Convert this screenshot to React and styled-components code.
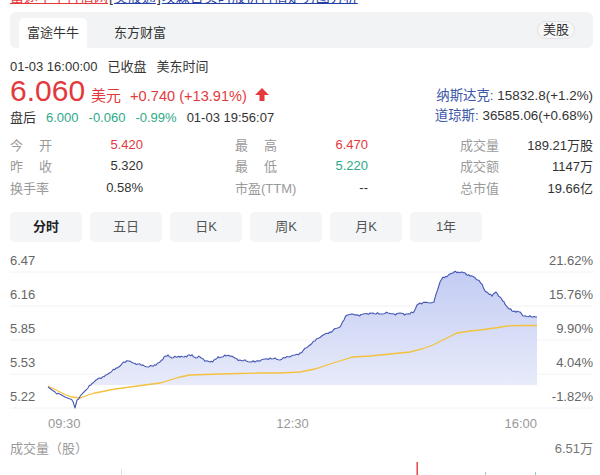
import React from 'react';
import styled, { createGlobalStyle } from 'styled-components';

const FONT = `"Liberation Sans", "Noto Sans CJK SC", sans-serif`;
const RED = '#e4393c';
const GREEN = '#2daa87';

const GlobalStyle = createGlobalStyle`
  html, body {
    margin: 0;
    padding: 0;
    background: #fff;
  }
  body {
    font-family: ${FONT};
    color: #333;
  }
`;

const Page = styled.div`
  width: 583px;
  padding-left: 10px;
  font-size: 13px;
`;

const TopLinks = styled.div`
  height: 6px;
  overflow: hidden;
  white-space: nowrap;
`;

const TopLinksInner = styled.div`
  margin-top: -10px;
  font-size: 14px;
  line-height: 14px;
  display: flex;
  gap: 1px;
`;

const TopLink = styled.span`
  color: ${p => (p.$red ? RED : '#2440a8')};
  text-decoration: underline;
`;

const SourceBar = styled.div`
  margin-top: 6px;
  height: 36px;
  box-sizing: border-box;
  padding: 6px 18px 0 9px;
  background: #f2f3f5;
  border-radius: 6px;
  display: flex;
  align-items: flex-end;
  gap: 19px;
`;

const SourceTab = styled.div`
  height: 30px;
  line-height: 30px;
  padding: 0 8px;
  font-size: 13px;
  color: #333;
  background: ${p => (p.$active ? '#fff' : 'transparent')};
  border-radius: 5px 5px 0 0;
`;

const MarketPill = styled.div`
  margin-left: auto;
  align-self: center;
  margin-top: -6px;
  padding: 0 5px;
  height: 16px;
  line-height: 16px;
  font-size: 13px;
  color: #333;
  background: #f7f7f7;
  border: 1px solid #e2e2e2;
  border-radius: 9px;
`;

const Quote = styled.div`
  margin-top: 10px;
  display: flex;
  justify-content: space-between;
  align-items: flex-end;
`;

const QuoteMain = styled.div`
  display: flex;
  flex-direction: column;
`;

const Line = styled.div`
  line-height: 18px;
  display: flex;
  gap: ${p => p.$gap || 10}px;
  white-space: nowrap;
`;

const PriceRow = styled.div`
  display: flex;
  align-items: baseline;
  height: 30px;
  margin-bottom: 3px;
  white-space: nowrap;
`;

const Price = styled.span`
  font-size: 30px;
  line-height: 30px;
  color: ${RED};
`;

const Currency = styled.span`
  font-size: 15px;
  color: ${RED};
  margin-left: 6px;
`;

const Change = styled.span`
  font-size: 14.6px;
  color: ${RED};
  margin-left: 9px;
`;

const UpArrow = styled.svg`
  width: 14px;
  height: 13px;
  margin-left: 8px;
  align-self: center;
  margin-top: 6px;
`;

const Green = styled.span`
  color: ${GREEN};
`;

const Indexes = styled.div`
  display: flex;
  flex-direction: column;
  align-items: flex-end;
  margin-bottom: 1px;
`;

const IndexLine = styled.div`
  line-height: 20px;
  font-size: 13.4px;
  white-space: nowrap;
`;

const IndexName = styled.span`
  color: #3d57a8;
`;

const Stats = styled.div`
  margin-top: 7px;
  display: grid;
  grid-template-columns: 133px 133px 133px;
  column-gap: 92px;
`;

const StatCell = styled.div`
  height: 21.3px;
  display: flex;
  align-items: center;
  justify-content: space-between;
  white-space: nowrap;
`;

const StatLabel = styled.span`
  color: #9a9a9a;
  width: ${p => (p.$spread ? '42px' : 'auto')};
  text-align: justify;
  text-align-last: ${p => (p.$spread ? 'justify' : 'auto')};
`;

const StatValue = styled.span`
  color: ${p => p.$color || '#333'};
`;

const Periods = styled.div`
  margin-top: 14px;
  display: flex;
  gap: 8px;
`;

const PeriodTab = styled.div`
  width: 72px;
  height: 30px;
  line-height: 30px;
  text-align: center;
  background: #f4f5f7;
  border-radius: 5px;
  font-size: 13px;
  color: ${p => (p.$active ? '#222' : '#555')};
  font-weight: ${p => (p.$active ? 700 : 400)};
`;

const ChartSvg = styled.svg`
  display: block;
  margin-top: 8px;
  width: 583px;
  height: 182px;
  font-family: ${FONT};
`;

const VolumeHead = styled.div`
  margin-top: 8px;
  height: 18px;
  line-height: 18px;
  display: flex;
  justify-content: space-between;
  color: #9a9a9a;
`;

const VolumeMax = styled.span`
  color: #777;
`;

const VolumeSvg = styled.svg`
  display: block;
  width: 583px;
  height: 20px;
`;

// page coordinates traced from the trading session
const pricePts = [
  [48, 387], [52, 390], [55, 392], [60, 394], [65, 397], [70, 399], [73, 402], [75, 408],
  [77, 400], [80, 396], [84, 392], [88, 388], [92, 384], [96, 380], [100, 378], [104, 376],
  [108, 374], [112, 371], [116, 369], [120, 366], [124, 362], [128, 360], [133, 363],
  [138, 364], [143, 366], [148, 367], [152, 366], [156, 364], [160, 362], [164, 357],
  [168, 356], [172, 358], [176, 357], [180, 356], [184, 357], [188, 355], [192, 356],
  [196, 358], [200, 357], [205, 360], [210, 362], [214, 360], [218, 358], [222, 357],
  [226, 356], [230, 355], [235, 358], [240, 360], [245, 361], [250, 362], [255, 362],
  [260, 360], [265, 359], [270, 358], [275, 359], [280, 360], [285, 358], [290, 356],
  [295, 355], [300, 353], [305, 349], [310, 345], [315, 341], [320, 337], [325, 334],
  [330, 332], [335, 329], [340, 327], [344, 320], [347, 315], [352, 314], [358, 315],
  [364, 314], [370, 313], [376, 314], [382, 314], [388, 313], [394, 314], [400, 313],
  [406, 314], [410, 314], [414, 312], [417, 305], [420, 303], [425, 302], [430, 303],
  [434, 302], [437, 292], [440, 282], [443, 277], [447, 276], [450, 274], [454, 272],
  [458, 273], [462, 272], [466, 274], [470, 275], [474, 277], [478, 280], [482, 285],
  [485, 291], [488, 293], [492, 295], [496, 292], [500, 297], [504, 303], [508, 308],
  [512, 311], [516, 311], [520, 312], [524, 316], [530, 317], [537, 317],
];

const avgPts = [
  [48, 386], [54, 389], [60, 392], [66, 395], [72, 397], [80, 398], [88, 395], [95, 393],
  [105, 391], [115, 389], [130, 387], [145, 385], [160, 383], [170, 380], [180, 377],
  [190, 375], [205, 374.5], [220, 374], [240, 373.5], [260, 373], [280, 373], [300, 372],
  [315, 369], [330, 364], [343, 360], [353, 357], [370, 356], [390, 354], [410, 352],
  [422, 349], [433, 345], [445, 339], [457, 333], [470, 331], [480, 330], [495, 328],
  [507, 326], [520, 325.5], [537, 325.5],
];

const OX = 10;
const OY = 250;

// densify with a little deterministic noise so the line looks tick-by-tick
const jagged = pts => {
  const out = [];
  for (let i = 0; i < pts.length - 1; i++) {
    const [x1, y1] = pts[i];
    const [x2, y2] = pts[i + 1];
    const steps = Math.max(1, Math.round((x2 - x1) / 1.5));
    for (let s = 0; s < steps; s++) {
      const t = s / steps;
      const n = (i * 7 + s) % 3 === 0 ? Math.sin(i * 3.1 + s * 1.7) * 1.3 : 0;
      out.push([x1 + (x2 - x1) * t, y1 + (y2 - y1) * t + n]);
    }
  }
  out.push(pts[pts.length - 1]);
  return out;
};

const toPath = pts =>
  pts.map(([x, y], i) => `${i ? 'L' : 'M'}${(x - OX).toFixed(1)} ${(y - OY).toFixed(1)}`).join(' ');

const priceLine = jagged(pricePts);
const pricePath = toPath(priceLine);
const areaPath = `${pricePath} L${537 - OX} ${385 - OY} L${48 - OX} ${385 - OY} Z`;
const avgPath = toPath(avgPts);

const gridY = [22, 56, 90, 124, 158];
const leftLabels = ['6.47', '6.16', '5.85', '5.53', '5.22'];
const rightLabels = ['21.62%', '15.76%', '9.90%', '4.04%', '-1.82%'];

const stats = [
  [{ label: '今开', spread: true, value: '5.420', color: RED }, { label: '最高', spread: true, value: '6.470', color: RED }, { label: '成交量', value: '189.21万股' }],
  [{ label: '昨收', spread: true, value: '5.320' }, { label: '最低', spread: true, value: '5.220', color: GREEN }, { label: '成交额', value: '1147万' }],
  [{ label: '换手率', value: '0.58%' }, { label: '市盈(TTM)', value: '--' }, { label: '总市值', value: '19.66亿' }],
];

const periods = ['分时', '五日', '日K', '周K', '月K', '1年'];

const Chart = () => (
  <ChartSvg viewBox="0 0 583 182">
    <defs>
      <linearGradient id="areaFill" x1="0" y1="0" x2="0" y2="1">
        <stop offset="0" stopColor="#c3ccf3" />
        <stop offset="1" stopColor="#eff1fb" />
      </linearGradient>
      <clipPath id="areaClip">
        <rect x="0" y="0" width="583" height={385 - OY} />
      </clipPath>
    </defs>
    {gridY.map(y => (
      <line key={y} x1="0" x2="583" y1={y} y2={y} stroke="#f1f2f4" strokeWidth="1" />
    ))}
    <path d={areaPath} fill="url(#areaFill)" fillRule="nonzero" clipPath="url(#areaClip)" />
    <path d={avgPath} fill="none" stroke="#f3c13d" strokeWidth="1.3" />
    <path d={pricePath} fill="none" stroke="#4657b4" strokeWidth="1.1" strokeLinejoin="round" />
    {leftLabels.map((t, i) => (
      <text key={t} x="0" y={gridY[i] - 7.4} fontSize="13" fill="#666">{t}</text>
    ))}
    {rightLabels.map((t, i) => (
      <text key={t} x="583" y={gridY[i] - 7.4} fontSize="13" fill="#666" textAnchor="end">{t}</text>
    ))}
    <text x="38" y="177.6" fontSize="13" fill="#999">09:30</text>
    <text x="282.5" y="177.6" fontSize="13" fill="#999" textAnchor="middle">12:30</text>
    <text x="527" y="177.6" fontSize="13" fill="#999" textAnchor="end">16:00</text>
  </ChartSvg>
);

const Volume = () => (
  <VolumeSvg viewBox="0 0 583 20">
    <rect x="111" y="11" width="1" height="9" fill="#cfe9e0" />
    <rect x="406.5" y="4" width="1.4" height="16" fill="#e4393c" />
    <rect x="475" y="14" width="1" height="6" fill="#8fcfb9" />
    <rect x="525" y="14" width="1" height="6" fill="#8fcfb9" />
  </VolumeSvg>
);

export default function App() {
  return (
    <>
      <GlobalStyle />
      <Page>
        <TopLinks>
          <TopLinksInner>
            <TopLink $red>富途牛牛行情网</TopLink>
            <span>[</span>
            <TopLink>美股通</TopLink>
            <span>]</span>
            <TopLink>埃森哲实时股价行情走势图分析</TopLink>
          </TopLinksInner>
        </TopLinks>

        <SourceBar>
          <SourceTab $active>富途牛牛</SourceTab>
          <SourceTab>东方财富</SourceTab>
          <MarketPill>美股</MarketPill>
        </SourceBar>

        <Quote>
          <QuoteMain>
            <Line>
              <span>01-03 16:00:00</span>
              <span>已收盘</span>
              <span>美东时间</span>
            </Line>
            <PriceRow>
              <Price>6.060</Price>
              <Currency>美元</Currency>
              <Change>+0.740 (+13.91%)</Change>
              <UpArrow viewBox="0 0 14 13">
                <path d="M7 0 L14 7 H9.5 V13 H4.5 V7 H0 Z" fill={RED} />
              </UpArrow>
            </PriceRow>
            <Line $gap={10}>
              <span>盘后</span>
              <Green>6.000</Green>
              <Green>-0.060</Green>
              <Green>-0.99%</Green>
              <span>01-03 19:56:07</span>
            </Line>
          </QuoteMain>
          <Indexes>
            <IndexLine>
              <IndexName>纳斯达克:</IndexName> 15832.8(+1.2%)
            </IndexLine>
            <IndexLine>
              <IndexName>道琼斯:</IndexName> 36585.06(+0.68%)
            </IndexLine>
          </Indexes>
        </Quote>

        <Stats>
          {stats.flat().map(s => (
            <StatCell key={s.label}>
              <StatLabel $spread={s.spread}>{s.label}</StatLabel>
              <StatValue $color={s.color}>{s.value}</StatValue>
            </StatCell>
          ))}
        </Stats>

        <Periods>
          {periods.map((p, i) => (
            <PeriodTab key={p} $active={i === 0}>{p}</PeriodTab>
          ))}
        </Periods>

        <Chart />

        <VolumeHead>
          <span>成交量（股）</span>
          <VolumeMax>6.51万</VolumeMax>
        </VolumeHead>
        <Volume />
      </Page>
    </>
  );
}
